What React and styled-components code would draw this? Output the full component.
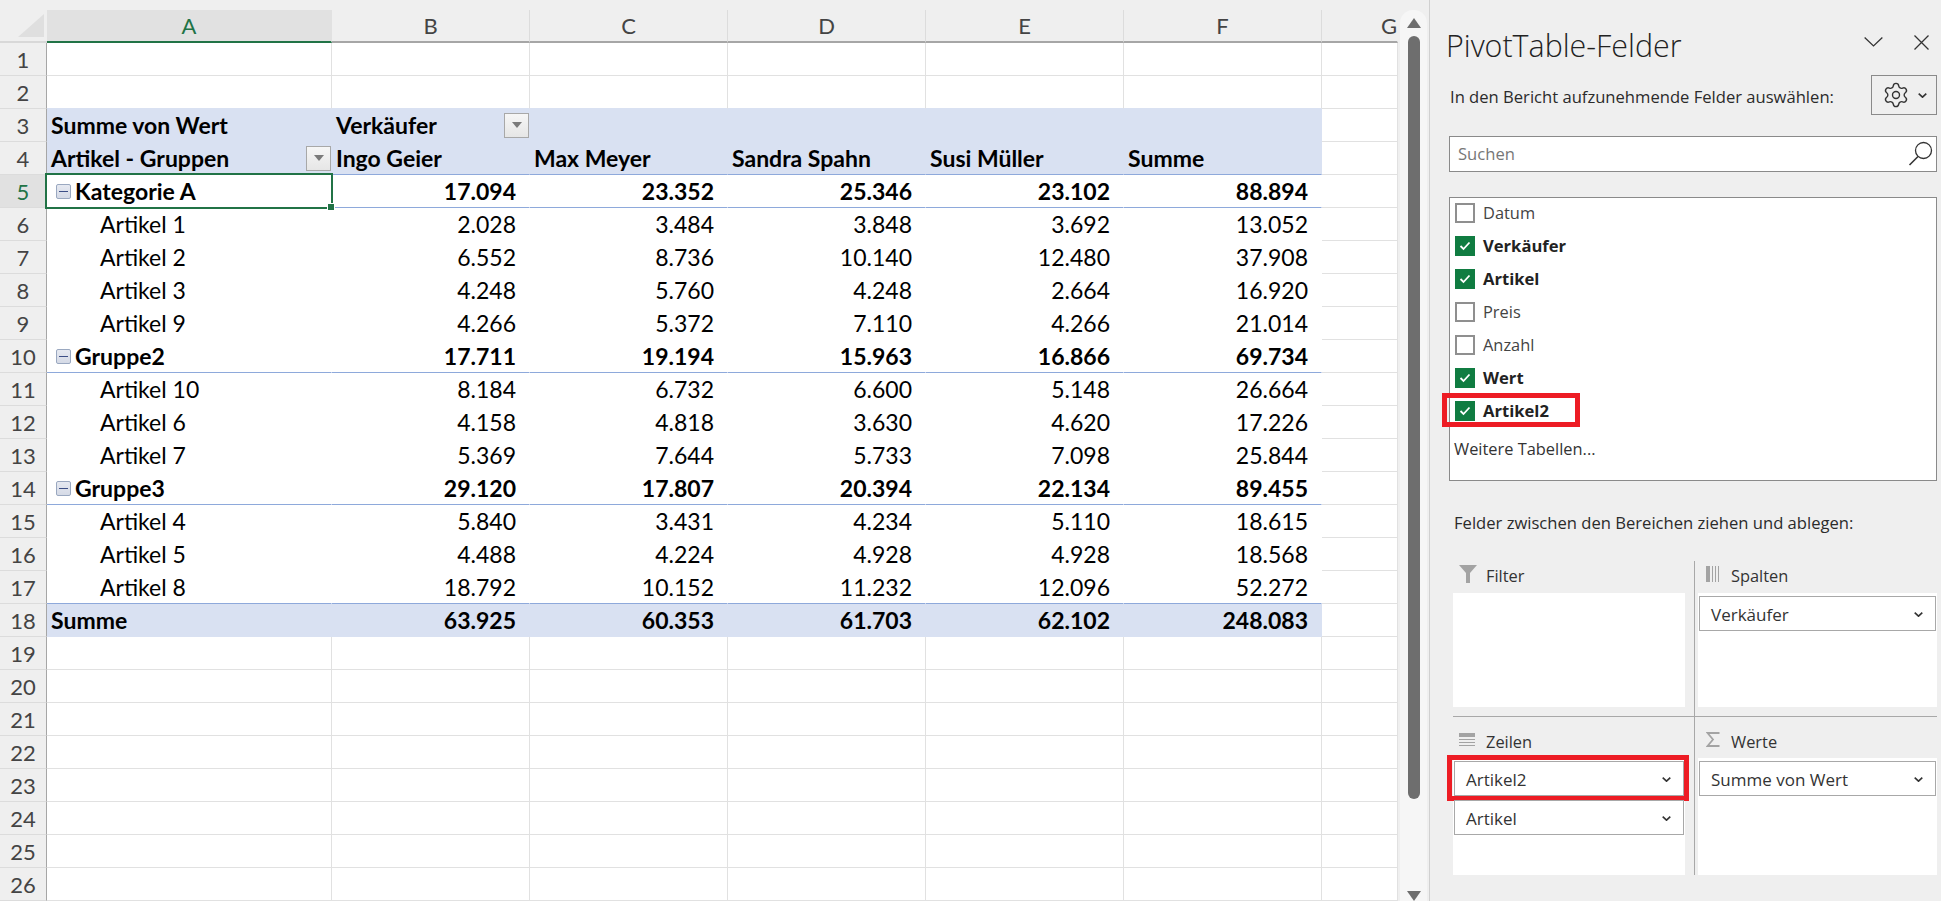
import React from "react";
import styled, { createGlobalStyle } from "styled-components";
import { Settings } from "lucide-react";

const Global = createGlobalStyle`
  html, body { margin: 0; padding: 0; background: #efefef; overflow: hidden; }
  #root { width: 1941px; height: 901px; }
`;

const Page = styled.div`
  display: flex;
  width: 1941px;
  height: 901px;
  overflow: hidden;
  background: #efefef;
`;

/* ---------- sheet ---------- */
const Sheet = styled.div`
  width: 1398px;
  flex: none;
  padding-top: 10px;
  box-sizing: border-box;
`;

const GridRow = styled.div`
  display: grid;
  grid-template-columns: 47px 285px repeat(5, 198px) 76px;
  height: 33px;
`;

const Corner = styled.div`
  background: #efefef;
  border-bottom: 2px solid #d8d8d8;
  box-sizing: border-box;
  display: flex;
  padding: 4px 3px 4px 18px;
`;

const CornerMark = styled.div`
  flex: 1;
  background: #dfdfdf;
  clip-path: polygon(100% 0, 100% 100%, 0 100%);
`;

const ColHead = styled.div`
  display: flex;
  align-items: center;
  justify-content: ${(p) => (p.$end ? "flex-end" : "center")};
  box-sizing: border-box;
  font: 400 22px "Lato", "Liberation Sans", sans-serif;
  color: ${(p) => (p.$active ? "#217346" : "#444")};
  background: ${(p) => (p.$active ? "#e1e1e1" : "#efefef")};
  border-bottom: 2px solid ${(p) => (p.$active ? "#217346" : "#a6a6a6")};
  border-right: 1px solid ${(p) => (p.$end || p.$active ? "transparent" : "#dcdcdc")};
  padding-bottom: 1px;
`;

const RowHead = styled.div`
  display: flex;
  align-items: center;
  justify-content: center;
  box-sizing: border-box;
  font: 400 22px "Lato", "Liberation Sans", sans-serif;
  color: ${(p) => (p.$active ? "#217346" : "#444")};
  background: ${(p) => (p.$active ? "#e1e1e1" : "#efefef")};
  border-bottom: 1px solid #dcdcdc;
  border-right: 1px solid #a6a6a6;
`;

const tones = {
  blank: "#fff",
  head: "#d9e1f2",
  total: "#d9e1f2",
  body: "#fff",
  group: "#fff",
};

const Cell = styled.div`
  position: relative;
  display: flex;
  align-items: center;
  justify-content: ${(p) => (p.$right ? "flex-end" : "flex-start")};
  box-sizing: border-box;
  min-width: 0;
  white-space: nowrap;
  font: ${(p) => (p.$tone === "body" ? 400 : 700)} 23px/1 "Lato", "Liberation Sans", sans-serif;
  color: #000;
  background: ${(p) => tones[p.$tone]};
  padding: 0 ${(p) => (p.$right ? 13 : 0)}px 0 ${(p) => p.$indent || 4}px;
  border-right: 1px solid ${(p) => (p.$tone === "blank" ? "#e1e1e1" : tones[p.$tone])};
  border-bottom: 1px solid ${(p) =>
    p.$line ? "#8ea9db" : p.$tone === "blank" ? (p.$beforeHead ? "#d9e1f2" : "#e1e1e1") : tones[p.$tone]};
`;

const CellLabel = styled.span`
  flex: 1;
`;

const FilterBtn = styled.span`
  flex: none;
  width: 25px;
  height: 25px;
  box-sizing: border-box;
  border: 1px solid #a8a8a8;
  background: linear-gradient(#f6f6f6, #e6e6e6);
  display: flex;
  align-items: center;
  justify-content: center;
  &::after {
    content: "";
    border-left: 5.5px solid transparent;
    border-right: 5.5px solid transparent;
    border-top: 6px solid #7a7a7a;
  }
`;

const Minus = styled.span`
  flex: none;
  width: 15px;
  height: 15px;
  margin-right: 4px;
  box-sizing: border-box;
  border: 1px solid #9aa8c0;
  border-radius: 2px;
  background: linear-gradient(#e6e9f1, #d5dae6);
  display: flex;
  align-items: center;
  justify-content: center;
  &::after {
    content: "";
    width: 9px;
    height: 1px;
    background: #3d4f86;
  }
`;

const Selection = styled.span`
  position: absolute;
  z-index: 2;
  left: -2px;
  top: -2px;
  right: -2px;
  bottom: -2px;
  border: 2px solid #217346;
  pointer-events: none;
  &::after {
    content: "";
    position: absolute;
    right: -3px;
    bottom: -3px;
    width: 6px;
    height: 6px;
    background: #217346;
    outline: 1px solid #fff;
  }
`;

/* ---------- scrollbar ---------- */
const ScrollColumn = styled.div`
  width: 31px;
  flex: none;
  padding: 10px 2px 0;
  box-sizing: border-box;
`;

const Track = styled.div`
  height: 100%;
  background: #f6f6f6;
  border-radius: 13px 13px 0 0;
  display: flex;
  flex-direction: column;
  align-items: center;
  padding: 8px 0 0;
  box-sizing: border-box;
`;

const Arrow = styled.span`
  width: 0;
  height: 0;
  border-left: 7px solid transparent;
  border-right: 7px solid transparent;
  ${(p) => (p.$down ? "border-top: 10px solid #6e6e6e;" : "border-bottom: 10px solid #6e6e6e;")}
`;

const Thumb = styled.div`
  width: 12px;
  height: 763px;
  margin: 8px 0 auto;
  background: #6e6e6e;
  border-radius: 6px;
`;

/* ---------- panel ---------- */
const Panel = styled.aside`
  width: 512px;
  flex: none;
  box-sizing: border-box;
  border-left: 1px solid #d0d0d0;
  padding: 28px 4px 0 19px;
  font-family: "Open Sans", "Noto Sans", "Liberation Sans", sans-serif;
  color: #2b2b2b;
  background: #efefef;
`;

const TitleRow = styled.div`
  display: flex;
  align-items: center;
  height: 36px;
  padding: 0 8px 0 0;
`;

const Title = styled.h2`
  flex: 1;
  margin: 0 0 2px -3px;
  font-size: 30.4px;
  font-weight: 300;
  color: #222;
  white-space: nowrap;
`;

const TitleIcons = styled.div`
  display: flex;
  align-items: center;
  gap: 30px;
  margin-bottom: 8px;
`;

const FieldsRow = styled.div`
  display: flex;
  align-items: center;
  justify-content: space-between;
  height: 40px;
  margin-top: 11px;
`;

const FieldsLabel = styled.span`
  margin: 2px 0 0 1px;
  font-size: 16.6px;
  white-space: nowrap;
`;

const GearBtn = styled.div`
  width: 66px;
  height: 40px;
  box-sizing: border-box;
  border: 1px solid #8a8a8a;
  display: flex;
  align-items: center;
  padding-left: 10px;
  gap: 8px;
  color: #333;
`;

const SearchBox = styled.div`
  display: flex;
  align-items: center;
  justify-content: space-between;
  height: 36px;
  margin-top: 21px;
  box-sizing: border-box;
  border: 1px solid #8a8a8a;
  background: #fff;
  padding: 0 3px 1px 8px;
  font-size: 16.6px;
  color: #777;
`;

const FieldList = styled.div`
  position: relative;
  height: 284px;
  margin-top: 25px;
  box-sizing: border-box;
  border: 1px solid #8a8a8a;
  background: #fff;
  padding-left: 5px;
`;

const FieldRow = styled.div`
  position: relative;
  display: flex;
  align-items: center;
  height: 33px;
  font-size: ${(p) => (p.$on ? 16.6 : 16.4)}px;
  font-weight: ${(p) => (p.$on ? 700 : 400)};
  color: ${(p) => (p.$on ? "#222" : "#444")};
  &:first-child { margin-top: -2px; }
`;

const Box = styled.span`
  flex: none;
  width: 20px;
  height: 20px;
  margin-right: 8px;
  box-sizing: border-box;
  display: flex;
  align-items: center;
  justify-content: center;
  border: 2px solid ${(p) => (p.$on ? "#107c41" : "#8f8f8f")};
  background: ${(p) => (p.$on ? "#107c41" : "#fff")};
`;

const MoreTables = styled.div`
  margin: 10px 0 0 -1px;
  font-size: 16.4px;
  color: #333;
`;

const Hint = styled.div`
  margin: 30px 0 0 5px;
  height: 24px;
  line-height: 24px;
  font-size: 16.6px;
  white-space: nowrap;
`;

const Areas = styled.div`
  display: grid;
  grid-template-columns: 242px 242px;
  grid-template-rows: 156px 158px;
  margin: 26px 0 0 4px;
`;

const Area = styled.div`
  display: flex;
  flex-direction: column;
  box-sizing: border-box;
  padding: ${(p) => (p.$side === "left" ? "0 9px 0 0" : "0 0 0 3px")};
  ${(p) => p.$side === "left" && "border-right: 1px solid #a8a8a8;"}
  ${(p) => p.$row === "top" && "border-bottom: 1px solid #a8a8a8; padding-bottom: 9px;"}
`;

const AreaHead = styled.div`
  display: flex;
  align-items: center;
  flex: none;
  height: ${(p) => (p.$row === "top" ? 32 : 41)}px;
  box-sizing: border-box;
  padding: ${(p) => (p.$row === "top" ? "0 0 4px" : "8px 0 0")};
  padding-left: ${(p) => (p.$side === "left" ? 6 : 8)}px;
  font-size: 16.4px;
  color: #333;
`;

const IconSlot = styled.span`
  flex: none;
  display: flex;
  width: ${(p) => (p.$side === "left" ? 27 : 25)}px;
  margin-top: ${(p) => (p.$row === "top" ? -2 : -4)}px;
`;

const AreaBox = styled.div`
  position: relative;
  flex: 1;
  background: #fff;
  display: flex;
  flex-direction: column;
  gap: 4px;
  padding: 3px 1px 0;
`;

const Pill = styled.div`
  position: relative;
  flex: none;
  height: 35px;
  box-sizing: border-box;
  border: 1px solid #a8a8a8;
  background: #fff;
  display: flex;
  align-items: center;
  justify-content: space-between;
  padding: 1px 12px 0 11px;
  font-size: 17px;
  color: #333;
`;

const RedBox = styled.span`
  position: absolute;
  box-sizing: border-box;
  border: 5px solid #ed1c24;
  pointer-events: none;
`;

const FieldMark = styled(RedBox)`
  left: -13px;
  top: -1px;
  width: 138px;
  height: 34px;
`;

const PillMark = styled(RedBox)`
  left: -8px;
  top: -7px;
  right: -6px;
  bottom: -6px;
`;

/* ---------- icons ---------- */
const Chevron = ({ w = 9, h = 5, sw = 1.6 }) => (
  <svg width={w} height={h} viewBox="0 0 9 5" fill="none" stroke="#333" strokeWidth={sw}>
    <polyline points="0.7,0.6 4.5,4.2 8.3,0.6" />
  </svg>
);

const FunnelIcon = () => (
  <svg width="18" height="18" viewBox="0 0 18 18" fill="#a3a3a3">
    <polygon points="0,0 18,0 11,8 11,18 7,18 7,8" />
  </svg>
);

const ColumnsIcon = () => (
  <svg width="14" height="16" viewBox="0 0 14 16" fill="#a3a3a3">
    <rect x="0" y="0" width="4" height="16" />
    <rect x="6" y="0" width="1" height="16" />
    <rect x="9" y="0" width="1" height="16" />
    <rect x="12" y="0" width="1" height="16" />
  </svg>
);

const RowsIcon = () => (
  <svg width="16" height="14" viewBox="0 0 16 14" fill="#a3a3a3">
    <rect x="0" y="0" width="16" height="4" />
    <rect x="0" y="6" width="16" height="1" />
    <rect x="0" y="9" width="16" height="1" />
    <rect x="0" y="12" width="16" height="1" />
  </svg>
);

const SigmaIcon = () => (
  <svg width="14" height="15" viewBox="0 0 14 15" fill="none" stroke="#a3a3a3" strokeWidth="1.8">
    <polyline points="13.5,1 1.5,1 7,7.5 1.5,14 13.5,14" />
  </svg>
);

const TickIcon = () => (
  <svg width="12" height="10" viewBox="0 0 12 10" fill="none" stroke="#fff" strokeWidth="1.8">
    <polyline points="1.5,5 4.5,8 10.5,1.5" />
  </svg>
);

const MagnifierIcon = () => (
  <svg width="25" height="25" viewBox="0 0 25 25" fill="none" stroke="#333" strokeWidth="1.3">
    <circle cx="15.5" cy="9.5" r="8" />
    <line x1="10" y1="15.5" x2="1.5" y2="24" strokeWidth="1.6" />
  </svg>
);

const CloseIcon = () => (
  <svg width="15" height="15" viewBox="0 0 15 15" fill="none" stroke="#333" strokeWidth="1.3">
    <path d="M0.5 0.5 L14.5 14.5 M14.5 0.5 L0.5 14.5" />
  </svg>
);

/* ---------- data ---------- */
const columns = ["A", "B", "C", "D", "E", "F", "G"];
const pivot = {
  3: { tone: "head", cells: ["Summe von Wert", "Verkäufer", "", "", "", ""] },
  4: { tone: "head", line: true, cells: ["Artikel - Gruppen", "Ingo Geier", "Max Meyer", "Sandra Spahn", "Susi Müller", "Summe"] },
  5: { tone: "group", line: true, cells: ["Kategorie A", "17.094", "23.352", "25.346", "23.102", "88.894"] },
  6: { tone: "body", cells: ["Artikel 1", "2.028", "3.484", "3.848", "3.692", "13.052"] },
  7: { tone: "body", cells: ["Artikel 2", "6.552", "8.736", "10.140", "12.480", "37.908"] },
  8: { tone: "body", cells: ["Artikel 3", "4.248", "5.760", "4.248", "2.664", "16.920"] },
  9: { tone: "body", cells: ["Artikel 9", "4.266", "5.372", "7.110", "4.266", "21.014"] },
  10: { tone: "group", line: true, cells: ["Gruppe2", "17.711", "19.194", "15.963", "16.866", "69.734"] },
  11: { tone: "body", cells: ["Artikel 10", "8.184", "6.732", "6.600", "5.148", "26.664"] },
  12: { tone: "body", cells: ["Artikel 6", "4.158", "4.818", "3.630", "4.620", "17.226"] },
  13: { tone: "body", cells: ["Artikel 7", "5.369", "7.644", "5.733", "7.098", "25.844"] },
  14: { tone: "group", line: true, cells: ["Gruppe3", "29.120", "17.807", "20.394", "22.134", "89.455"] },
  15: { tone: "body", cells: ["Artikel 4", "5.840", "3.431", "4.234", "5.110", "18.615"] },
  16: { tone: "body", cells: ["Artikel 5", "4.488", "4.224", "4.928", "4.928", "18.568"] },
  17: { tone: "body", line: true, cells: ["Artikel 8", "18.792", "10.152", "11.232", "12.096", "52.272"] },
  18: { tone: "total", cells: ["Summe", "63.925", "60.353", "61.703", "62.102", "248.083"] },
};

const fields = [
  ["Datum", false],
  ["Verkäufer", true],
  ["Artikel", true],
  ["Preis", false],
  ["Anzahl", false],
  ["Wert", true],
  ["Artikel2", true],
];

const rowNumbers = Array.from({ length: 26 }, (_, i) => i + 1);

const PivotCell = ({ row, def, index, text }) => {
  const isHead = def.tone === "head";
  const right = !isHead && index > 0;
  const isGroup = def.tone === "group";
  const indent = index === 0 && def.tone === "body" ? 53 : index === 0 && isGroup ? 9 : 4;
  const showFilter = (row === 3 && index === 1) || (row === 4 && index === 0);
  const selected = row === 5 && index === 0;
  return (
    <Cell $tone={def.tone} $line={def.line} $right={right} $indent={indent}>
      {index === 0 && isGroup && <Minus />}
      {showFilter ? <CellLabel>{text}</CellLabel> : text}
      {showFilter && <FilterBtn />}
      {selected && <Selection />}
    </Cell>
  );
};

const SheetRow = ({ n }) => {
  const def = pivot[n];
  return (
    <GridRow>
      <RowHead $active={n === 5}>{n}</RowHead>
      {def
        ? def.cells.map((text, i) => <PivotCell key={i} row={n} def={def} index={i} text={text} />)
        : columns.slice(0, 6).map((c) => <Cell key={c} $tone="blank" $beforeHead={n === 2} />)}
      <Cell $tone="blank" />
    </GridRow>
  );
};

export default function App() {
  return (
    <Page>
      <Global />
      <Sheet>
        <GridRow>
          <Corner>
            <CornerMark />
          </Corner>
          {columns.map((c, i) => (
            <ColHead key={c} $active={i === 0} $end={c === "G"}>
              {c}
            </ColHead>
          ))}
        </GridRow>
        {rowNumbers.map((n) => (
          <SheetRow key={n} n={n} />
        ))}
      </Sheet>

      <ScrollColumn>
        <Track>
          <Arrow />
          <Thumb />
          <Arrow $down />
        </Track>
      </ScrollColumn>

      <Panel>
        <TitleRow>
          <Title>PivotTable-Felder</Title>
          <TitleIcons>
            <Chevron w={21} h={12} sw={0.55} />
            <CloseIcon />
          </TitleIcons>
        </TitleRow>

        <FieldsRow>
          <FieldsLabel>In den Bericht aufzunehmende Felder auswählen:</FieldsLabel>
          <GearBtn>
            <Settings size={28} strokeWidth={1.2} />
            <Chevron />
          </GearBtn>
        </FieldsRow>

        <SearchBox>
          Suchen
          <MagnifierIcon />
        </SearchBox>

        <FieldList>
          {fields.map(([label, on]) => (
            <FieldRow key={label} $on={on}>
              <Box $on={on}>{on && <TickIcon />}</Box>
              {label}
              {label === "Artikel2" && <FieldMark />}
            </FieldRow>
          ))}
          <MoreTables>Weitere Tabellen...</MoreTables>
        </FieldList>

        <Hint>Felder zwischen den Bereichen ziehen und ablegen:</Hint>

        <Areas>
          <Area $side="left" $row="top">
            <AreaHead $side="left" $row="top">
              <IconSlot $side="left" $row="top"><FunnelIcon /></IconSlot>
              Filter
            </AreaHead>
            <AreaBox />
          </Area>
          <Area $side="right" $row="top">
            <AreaHead $side="right" $row="top">
              <IconSlot $side="right" $row="top"><ColumnsIcon /></IconSlot>
              Spalten
            </AreaHead>
            <AreaBox>
              <Pill>Verkäufer<Chevron /></Pill>
            </AreaBox>
          </Area>
          <Area $side="left" $row="bottom">
            <AreaHead $side="left" $row="bottom">
              <IconSlot $side="left" $row="bottom"><RowsIcon /></IconSlot>
              Zeilen
            </AreaHead>
            <AreaBox>
              <Pill>Artikel2<Chevron /><PillMark /></Pill>
              <Pill>Artikel<Chevron /></Pill>
            </AreaBox>
          </Area>
          <Area $side="right" $row="bottom">
            <AreaHead $side="right" $row="bottom">
              <IconSlot $side="right" $row="bottom"><SigmaIcon /></IconSlot>
              Werte
            </AreaHead>
            <AreaBox>
              <Pill>Summe von Wert<Chevron /></Pill>
            </AreaBox>
          </Area>
        </Areas>
      </Panel>
    </Page>
  );
}
